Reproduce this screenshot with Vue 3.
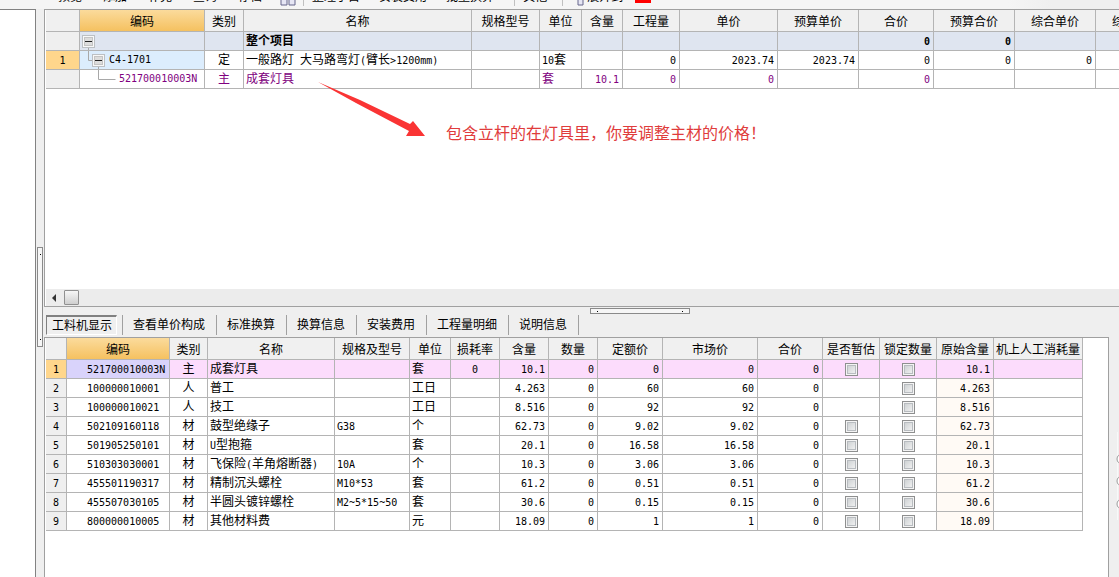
<script setup>
const toolGroups = [
  { icon: false, items: ['预览', '添加', '补充', '查询', '存档'] },
  { icon: true, items: [] },
  { icon: false, items: ['整理子目', '安装费用', '批量换算'] },
  { icon: false, items: ['其他'] },
  { icon: true, items: ['展开到'] },
]

const budgetCols = [
  { label: '', width: 34 },
  { label: '编码', width: 125, cls: 'code' },
  { label: '类别', width: 39, cls: 'mid' },
  { label: '名称', width: 228 },
  { label: '规格型号', width: 68 },
  { label: '单位', width: 42 },
  { label: '含量', width: 41, cls: 'num' },
  { label: '工程量', width: 57, cls: 'num' },
  { label: '单价', width: 98, cls: 'num' },
  { label: '预算单价', width: 81, cls: 'num' },
  { label: '合价', width: 75, cls: 'num' },
  { label: '预算合价', width: 81, cls: 'num' },
  { label: '综合单价', width: 81, cls: 'num' },
  { label: '综合合价', width: 81, cls: 'num' },
]

const budgetRows = [
  { cls: 'summary', level: 0, cells: ['', '', '', '整个项目', '', '', '', '', '', '', '0', '0', '', ''] },
  { cls: 'current', level: 1, cells: ['1', 'C4-1701', '定', '一般路灯 大马路弯灯(臂长>1200mm)', '', '10套', '', '0', '2023.74', '2023.74', '0', '0', '0', ''] },
  { cls: 'material', level: 2, cells: ['', '521700010003N', '主', '成套灯具', '', '套', '10.1', '0', '0', '', '0', '', '', ''] },
]

const tabs = ['工料机显示', '查看单价构成', '标准换算', '换算信息', '安装费用', '工程量明细', '说明信息']

const detailCols = [
  { label: '', width: 21 },
  { label: '编码', width: 103, cls: 'code' },
  { label: '类别', width: 38, cls: 'mid' },
  { label: '名称', width: 127 },
  { label: '规格及型号', width: 75 },
  { label: '单位', width: 41 },
  { label: '损耗率', width: 49, cls: 'mid' },
  { label: '含量', width: 49, cls: 'num' },
  { label: '数量', width: 49, cls: 'num' },
  { label: '定额价', width: 65, cls: 'num' },
  { label: '市场价', width: 95, cls: 'num' },
  { label: '合价', width: 65, cls: 'num' },
  { label: '是否暂估', width: 57, cls: 'mid', check: true },
  { label: '锁定数量', width: 57, cls: 'mid', check: true },
  { label: '原始含量', width: 57, cls: 'num origin' },
  { label: '机上人工消耗量', width: 89, cls: 'num' },
]

const detailRows = [
  ['1', '521700010003N', '主', '成套灯具', '', '套', '0', '10.1', '0', '0', '0', '0', true, true, '10.1', ''],
  ['2', '100000010001', '人', '普工', '', '工日', '', '4.263', '0', '60', '60', '0', false, true, '4.263', ''],
  ['3', '100000010021', '人', '技工', '', '工日', '', '8.516', '0', '92', '92', '0', false, true, '8.516', ''],
  ['4', '502109160118', '材', '鼓型绝缘子', 'G38', '个', '', '62.73', '0', '9.02', '9.02', '0', true, true, '62.73', ''],
  ['5', '501905250101', '材', 'U型抱箍', '', '套', '', '20.1', '0', '16.58', '16.58', '0', true, true, '20.1', ''],
  ['6', '510303030001', '材', '飞保险(羊角熔断器)', '10A', '个', '', '10.3', '0', '3.06', '3.06', '0', true, true, '10.3', ''],
  ['7', '455501190317', '材', '精制沉头螺栓', 'M10*53', '套', '', '61.2', '0', '0.51', '0.51', '0', true, true, '61.2', ''],
  ['8', '455507030105', '材', '半圆头镀锌螺栓', 'M2~5*15~50', '套', '', '30.6', '0', '0.15', '0.15', '0', true, true, '30.6', ''],
  ['9', '800000010005', '材', '其他材料费', '', '元', '', '18.09', '0', '1', '1', '0', true, true, '18.09', ''],
]

// Splits a value into half-width and full-width runs, each set in its own face.
const runs = (text) => text.split(/([\x20-\x7e]+)/).filter(Boolean)
const isLatin = (run) => /^[\x20-\x7e]/.test(run)
const total = (cols) => cols.reduce((sum, c) => sum + c.width, 0) + 'px'
</script>

<template>
  <div class="app">
    <header class="toolbar">
      <div v-for="(g, i) in toolGroups" :key="i" class="group" :class="'g' + i">
        <svg v-if="g.icon" class="tool-icon" :width="i === 1 ? 16 : 7" height="16" :viewBox="i === 1 ? '0 0 16 16' : '0 0 7 16'" aria-hidden="true">
          <path :d="i === 1 ? 'M1 3h6v12H1zM9 3h6v12H9z' : 'M1 3h5v12H1z'" fill="#e6e6f4" stroke="#66668c" />
        </svg>
        <button v-for="t in g.items" :key="t" type="button">{{ t }}</button>
      </div>
      <span class="flag"></span>
    </header>

    <div class="workspace">
      <aside class="side"></aside>
      <div class="gutter"><div class="grip vertical"><i></i><i></i></div></div>

      <main class="main">
        <section class="budget">
          <div class="canvas">
            <table :style="{ width: total(budgetCols) }">
              <colgroup>
                <col v-for="(c, i) in budgetCols" :key="i" :style="{ width: c.width + 'px' }" />
              </colgroup>
              <thead>
                <tr><th v-for="(c, i) in budgetCols" :key="i" scope="col" :class="c.cls">{{ c.label }}</th></tr>
              </thead>
              <tbody>
                <tr v-for="(r, ri) in budgetRows" :key="ri" :class="r.cls">
                  <td v-for="(v, i) in r.cells" :key="i" :class="[i === 0 ? 'index' : budgetCols[i].cls, i === 1 && 'tree']">
                    <div v-if="i === 1" class="node">
                      <svg v-if="r.level === 0" width="28" height="19" viewBox="0 0 28 19" aria-hidden="true">
                        <path d="M8.500 15v4" stroke="#a8a8a8" />
                        <rect x="2.500" y="3.500" width="12" height="12" fill="#f8f8f8" stroke="#bcc0c4" />
                        <rect x="4.500" y="5.500" width="8" height="8" fill="#dcdcdc" stroke="#c4c4c4" />
                        <path d="M5 9.500h7" stroke="#222" />
                      </svg>
                      <svg v-else-if="r.level === 1" width="28" height="19" viewBox="0 0 28 19" aria-hidden="true">
                        <path d="M8.500 0v9.500h4M18.500 15v4" fill="none" stroke="#a8a8a8" />
                        <rect x="12.500" y="3.500" width="12" height="12" fill="#f8f8f8" stroke="#bcc0c4" />
                        <rect x="14.500" y="5.500" width="8" height="8" fill="#dcdcdc" stroke="#c4c4c4" />
                        <path d="M15 9.500h7" stroke="#222" />
                      </svg>
                      <svg v-else width="38" height="19" viewBox="0 0 38 19" aria-hidden="true">
                        <path d="M18.500 0v9.500h17" fill="none" stroke="#a8a8a8" />
                      </svg>
                      <span class="latin">{{ v }}</span>
                    </div>
                    <template v-else>
                      <span v-for="(t, k) in runs(v)" :key="k" :class="{ latin: isLatin(t) }">{{ t }}</span>
                    </template>
                  </td>
                </tr>
              </tbody>
            </table>
            <div class="note">
              <svg width="110" height="58" viewBox="0 0 110 58" aria-hidden="true">
                <path d="M0 0 L42 18 L92 42 L95 39 L107 54 L88 54 L91 49 L38 21 Z" fill="#fa3434" />
              </svg>
              <p>包含立杆的在灯具里，你要调整主材的价格！</p>
            </div>
          </div>
          <div class="scrollbar">
            <button type="button" class="arrow" aria-label="向左滚动">
              <svg width="4" height="8" viewBox="0 0 4 8"><path d="M4 0v8L0 4z" fill="#333" /></svg>
            </button>
            <span class="thumb"></span>
          </div>
        </section>

        <nav class="tabs">
          <div v-for="(t, i) in tabs" :key="t" class="tab"><button type="button" :class="{ active: i === 0 }">{{ t }}</button></div>
          <div class="grip horizontal"><i></i><i></i></div>
        </nav>

        <div class="lower">
          <section class="detail">
            <table :style="{ width: total(detailCols) }">
              <colgroup>
                <col v-for="(c, i) in detailCols" :key="i" :style="{ width: c.width + 'px' }" />
              </colgroup>
              <thead>
                <tr><th v-for="(c, i) in detailCols" :key="i" scope="col" :class="c.cls">{{ c.label }}</th></tr>
              </thead>
              <tbody>
                <tr v-for="(r, ri) in detailRows" :key="ri" :class="{ picked: ri === 0 }">
                  <td v-for="(v, i) in r" :key="i" :class="i === 0 ? 'index' : detailCols[i].cls">
                    <template v-if="detailCols[i].check">
                      <input v-if="v" type="checkbox" :aria-label="detailCols[i].label + ' ' + r[3]" />
                    </template>
                    <template v-else>
                      <span v-for="(t, k) in runs(v)" :key="k" :class="{ latin: isLatin(t) }">{{ t }}</span>
                    </template>
                  </td>
                </tr>
              </tbody>
            </table>
          </section>
          <aside class="edge">
            <svg width="10" height="90" viewBox="0 0 10 90" aria-hidden="true">
              <path d="M8.500 0v88" stroke="#f8f8f8" />
              <g fill="#fff" stroke="#9a9a9a">
                <circle cx="13" cy="27" r="5" /><circle cx="13" cy="49" r="5" /><circle cx="13" cy="72" r="5" />
              </g>
            </svg>
          </aside>
        </div>
      </main>
    </div>
  </div>
</template>

<style>
body { margin: 0; overflow: hidden; }
</style>

<style scoped>
.app {
  display: flex;
  flex-direction: column;
  height: 100vh;
  overflow: hidden;
  background: #efefef;
  color: #000;
  font: 12px/18px "Liberation Sans", "Noto Sans CJK SC", sans-serif;
}
button {
  padding: 0;
  border: 0;
  background: none;
  color: inherit;
  font: inherit;
  white-space: nowrap;
}

.toolbar {
  display: flex;
  align-items: flex-end;
  flex: none;
  box-sizing: border-box;
  height: 9px;
  padding: 0 0 3px 50px;
  overflow: hidden;
  background: linear-gradient(90deg, #f5f5f5 90%, #efefef 94%);
}
.group { display: flex; align-items: flex-end; flex: none; gap: 19px; padding: 0 20px 0 8px; }
.group + .group { border-left: 1px solid #c0c0c0; }
.g0 { gap: 21px; padding-right: 0; }
.g1.group { padding: 0 7px 0 18px; border-left: 0; }
.g3 { padding-right: 15px; }
.g4 { gap: 3px; padding-right: 12px; padding-left: 14px; }
.tool-icon { display: block; }
.flag { width: 16px; height: 16px; margin-bottom: 3px; background: #f00; flex: none; }

.workspace { display: flex; flex: 1; min-height: 0; }
.side { flex: none; width: 35px; border-top: 1px solid #828282; border-right: 1px solid #828282; background: #fff; }
.gutter { position: relative; flex: none; width: 8px; }
.main { display: flex; flex-direction: column; flex: 1; min-width: 0; }

.grip { position: absolute; display: flex; justify-content: space-between; box-sizing: border-box; border: 1px solid #8a8a8a; background: #f6f6f6; }
.grip i { width: 1px; height: 1px; background: #000; }
.vertical { top: 238px; left: 1px; flex-direction: column; align-items: center; width: 6px; height: 100px; padding: 6px 0; }
.horizontal { top: 1px; left: 546px; align-items: center; width: 100px; height: 6px; padding: 0 6px; }

.budget {
  display: flex;
  flex-direction: column;
  flex: none;
  box-sizing: border-box;
  border: solid #a0a0a0;
  border-width: 1px 0 1px 1px;
  background: #fff;
}
.canvas { position: relative; height: 279px; padding-left: 1px; overflow: hidden; }

table { table-layout: fixed; border-collapse: separate; border-spacing: 0; }
th, td {
  box-sizing: border-box;
  padding: 0 2px;
  border: solid #b4b4b4;
  border-width: 0 1px 1px 0;
  overflow: hidden;
  text-align: left;
  white-space: nowrap;
}
th { height: 22px; padding: 2px 0 0; line-height: 18px; background: #f0f0f0; font-weight: 400; text-align: center; }
th.code { background: linear-gradient(#fbdb9c, #f5c160); }
td { height: 19px; line-height: 16px; }
td span { white-space: pre; }
td.num { padding-right: 3px; text-align: right; }
td.mid, td.index { text-align: center; }
td.index { padding: 0; background: #efefef; }
td.code { padding-left: 20px; }
td.tree { padding: 0; }
td.origin { background: #fffaf5; }
.latin { font-family: "DejaVu Sans Mono", monospace; font-size: 10px; line-height: 12px; }
.node { display: flex; align-items: center; height: 18px; }
.node svg { display: block; flex: none; margin-right: 1px; }

.summary td { background: #dfe5f0; font-weight: 700; }
.summary td.index { background: #efefef; }
.current td.index, .picked td.index { background: #ffd68c; }
.current td.tree { background: #dcedfd; }
.material td { color: #800080; }
.picked td { background: #fcdcfc; }
.picked td.code { background: #d9d3fb; }

.note { position: absolute; top: 72px; left: 273px; display: flex; color: #e03c3c; }
.note svg { display: block; }
.note p { margin: 40px 0 0 18px; font-size: 16px; line-height: 24px; white-space: nowrap; }

.scrollbar { display: flex; align-items: center; height: 17px; margin-left: 1px; background: #ececec; }
.arrow { display: flex; align-items: center; justify-content: center; width: 16px; height: 16px; }
.thumb { box-sizing: border-box; width: 15px; height: 15px; margin-left: 2px; border: 1px solid #909090; border-radius: 1px; background: linear-gradient(#f6f6f6, #cfcfcf); }

.tabs { position: relative; display: flex; align-items: center; flex: none; height: 22px; padding: 7px 0 1px 2px; }
.tab { display: flex; align-items: center; height: 20px; padding: 0 11px 0 10px; border-right: 1px solid #a0a0a0; }
.tab:first-child { padding: 0 5px 0 0; }
.tab button { height: 20px; padding-top: 1px; line-height: 19px; }
.tab .active { box-sizing: border-box; padding: 1px 4px 0 5px; border: solid; border-width: 2px 1px 1px; border-color: #808080 #fff #fff #808080; line-height: 16px; }

.lower { display: flex; flex: 1; min-height: 0; }
.detail { flex: 1; min-width: 0; padding-left: 1px; border: solid #a0a0a0; border-width: 1px 1px 0; background: #fff; overflow: hidden; }
.edge { flex: none; width: 10px; }
.edge svg { display: block; margin-top: 95px; }

input {
  display: block;
  box-sizing: border-box;
  width: 13px;
  height: 13px;
  margin: 0 auto;
  appearance: none;
  border: 1px solid #8e8f8f;
  background: linear-gradient(135deg, #c6cacc, #f8f8f8);
  box-shadow: inset 0 0 0 1px #f4f4f4, inset 0 0 0 2px #b8bcc0;
}
</style>
